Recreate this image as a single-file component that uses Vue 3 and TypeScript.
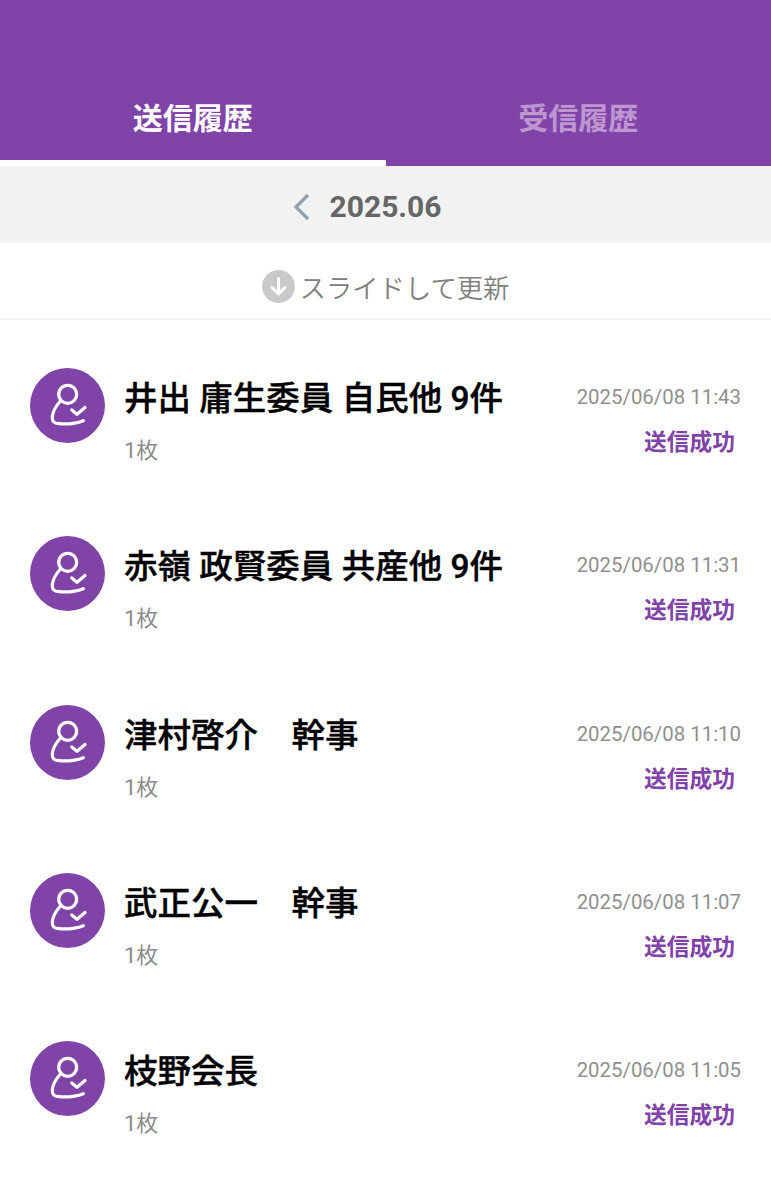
<script setup lang="ts">
type HistoryItem = {
  name: string
  date: string
}

const items: HistoryItem[] = [
  { name: '井出 庸生委員 自民他 9件', date: '2025/06/08 11:43' },
  { name: '赤嶺 政賢委員 共産他 9件', date: '2025/06/08 11:31' },
  { name: '津村啓介　幹事', date: '2025/06/08 11:10' },
  { name: '武正公一　幹事', date: '2025/06/08 11:07' },
  { name: '枝野会長', date: '2025/06/08 11:05' }
]
</script>

<template>
  <div class="page">
    <header class="tabs">
      <div class="tab tab--active">送信履歴</div>
      <div class="tab">受信履歴</div>
    </header>

    <div class="month">
      <svg class="month__back" width="20" height="28" viewBox="0 0 20 28">
        <path d="M16 2 L4 14 L16 26" fill="none" stroke="#8fa0b2" stroke-width="3.2" />
      </svg>
      <span class="month__label">2025.06</span>
    </div>

    <div class="refresh">
      <svg class="refresh__icon" width="33" height="33" viewBox="0 0 33 33">
        <circle cx="16.5" cy="16.5" r="16.5" fill="#c9c9c9" />
        <path
          d="M16.5 8.5 V23.5 M10 17.5 L16.5 24 L23 17.5"
          fill="none"
          stroke="#fff"
          stroke-width="3"
          stroke-linecap="round"
          stroke-linejoin="round"
        />
      </svg>
      <span>スライドして更新</span>
    </div>

    <ul class="list">
      <li v-for="item in items" :key="item.date" class="row">
        <div class="avatar">
          <svg width="75" height="75" viewBox="0 0 75 75">
            <circle cx="37.5" cy="37.5" r="37.5" fill="#8044a9" />
            <g fill="none" stroke="#fff" stroke-width="3.2" stroke-linecap="round" stroke-linejoin="round">
              <circle cx="37.7" cy="26.3" r="9" />
              <path d="M30 33.5 C26 38 23 43.5 22.3 48.5 C21.8 53.5 24 55.5 29 55.7 C38 56.5 46 55.5 53.3 52.7" />
              <path d="M41.7 42 L47 46.3 L55 39.5" />
            </g>
          </svg>
        </div>
        <div class="row__main">
          <div class="row__name">{{ item.name }}</div>
          <div class="row__count">1枚</div>
        </div>
        <div class="row__side">
          <div class="row__date">{{ item.date }}</div>
          <div class="row__status">送信成功</div>
        </div>
      </li>
    </ul>
  </div>
</template>

<style>
html,
body {
  margin: 0;
  background: #fff;
}
</style>

<style scoped>
.page {
  width: 771px;
  height: 1200px;
  overflow: hidden;
  background: #fff;
  font-family: "Roboto", "Noto Sans CJK JP", sans-serif;
}

.tabs {
  display: flex;
  height: 166px;
  background: #8044a9;
}

.tab {
  flex: 1;
  box-sizing: border-box;
  padding-top: 97px;
  text-align: center;
  font-size: 30px;
  line-height: 43px;
  font-weight: 700;
  color: #bd97d0;
}

.tab--active {
  color: #fff;
  border-bottom: 6px solid #fff;
}

.month {
  display: flex;
  align-items: center;
  justify-content: center;
  gap: 18px;
  box-sizing: border-box;
  height: 77px;
  padding: 4px 38px 0 0;
  background: #f2f2f3;
}

.month__label {
  font-size: 30px;
  font-weight: 700;
  color: #666;
}

.refresh {
  display: flex;
  align-items: center;
  justify-content: center;
  gap: 5px;
  box-sizing: border-box;
  height: 77px;
  padding-top: 12px;
  border-bottom: 2px solid #f1f1f1;
  font-size: 26.3px;
  font-weight: 350;
  color: #808080;
}

.list {
  margin: 0;
  padding: 0;
  list-style: none;
}

.row {
  display: flex;
  box-sizing: border-box;
  height: 168.3px;
  padding: 48px 30px 0;
}

.avatar {
  width: 75px;
  height: 75px;
  flex: none;
}

.avatar svg {
  display: block;
}

.row__main {
  flex: 1;
  margin-left: 19px;
  min-width: 0;
}

.row__name {
  margin-top: 8px;
  font-size: 33.5px;
  line-height: 46px;
  font-weight: 500;
  color: #000;
  white-space: nowrap;
  -webkit-text-stroke: 0.4px #000;
}

.row__count {
  margin-top: 13px;
  font-size: 22px;
  line-height: 32px;
  color: #8c8c8c;
}

.row__side {
  display: flex;
  flex-direction: column;
  align-items: flex-end;
  flex: none;
}

.row__date {
  margin-top: 16px;
  font-size: 20.4px;
  line-height: 26px;
  color: #8f8f8f;
  white-space: nowrap;
}

.row__status {
  margin-top: 16px;
  margin-right: 6px;
  font-size: 22.75px;
  line-height: 33px;
  font-weight: 700;
  color: #8044a9;
}
</style>
